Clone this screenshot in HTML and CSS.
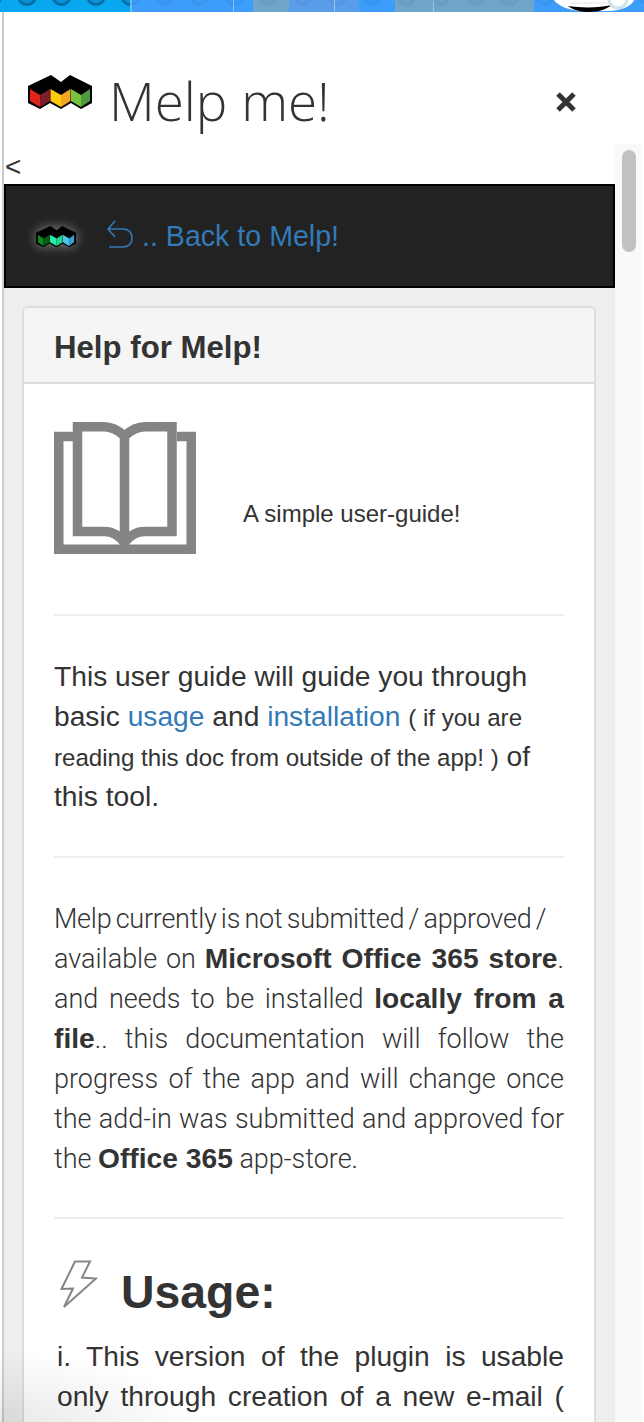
FILE: index.html
```html
<!DOCTYPE html>
<html>
<head>
  <meta charset="utf-8">
  <title>Melp me!</title>
  <link rel="stylesheet" href="styles.css">
</head>
<body>
  <div class="topstrip">
    <div class="seg seg-sky seg-a"></div>
    <div class="seg seg-blue seg-b"></div>
    <div class="seg seg-blue seg-c"></div>
    <div class="seg seg-grey seg-d"></div>
    <div class="seg seg-mid seg-e"></div>
    <div class="seg seg-mid seg-f"></div>
    <div class="seg seg-blue seg-d"></div>
    <div class="seg seg-grey seg-g"></div>
    <div class="seg seg-grey seg-h"></div>
    <div class="seg seg-blue seg-i"></div>
    <svg class="badge" viewBox="0 0 90 12">
      <path d="M4 0H84C82 6 72 10 60 11H32C18 10 8 6 4 0Z" fill="#fff"/>
      <path d="M18 6C30 8 50 8 62 5C56 9 50 12 40 12C30 12 24 10 18 6Z" fill="#000"/>
      <path d="M20 3H62" stroke="#dfe6ea" stroke-width="1"/>
      <circle cx="68" cy="-1" r="9" fill="none" stroke="#cfe3ec" stroke-width="3"/>
    </svg>
  </div>

  <div class="shell">
    <div class="title-row">
      <svg class="logo" viewBox="0 0 64 36">
        <polygon points="0,12 23,1 33,8 42,1 64,12 64,29 53,35 43,29 33,35 22,29 12,35 0,29" fill="#000"/>
        <polygon points="2,15 12,21 12,33 2,27" fill="#e0241b"/>
        <polygon points="12,21 22,15 22,27 12,33" fill="#7c1d2b"/>
        <polygon points="22.5,15 33,21 33,33 22.5,27" fill="#fccb0b"/>
        <polygon points="33,21 42.5,15 42.5,27 33,33" fill="#f5a623"/>
        <polygon points="43,15 53,21 53,33 43,27" fill="#7ac142"/>
        <polygon points="53,21 62,15 62,27 53,33" fill="#4f9a3f"/>
      </svg>
      <h1 class="app-title">Melp me!</h1>
      <svg class="close" viewBox="0 0 22 22">
        <path d="M3 3L19 19M19 3L3 19" fill="none" stroke="#333" stroke-width="5"/>
      </svg>
    </div>

    <div class="scroll-wrap">
      <div class="scroll-content">
        <div class="crumb">&lt;</div>
        <div class="backbar">
          <svg class="logo-small" viewBox="0 0 64 36">
            <polygon points="0,12 23,1 33,8 42,1 64,12 64,29 53,35 43,29 33,35 22,29 12,35 0,29" fill="#000"/>
            <polygon points="3,15 12,21 12,33 3,27" fill="#0f8a1c"/>
            <polygon points="12,21 22,15 22,27 12,33" fill="#0a5c14"/>
            <polygon points="22.5,15 33,21 33,33 22.5,27" fill="#1df0a8"/>
            <polygon points="33,21 42.5,15 42.5,27 33,33" fill="#25d58c"/>
            <polygon points="43,15 53,21 53,33 43,27" fill="#4cc4ea"/>
            <polygon points="53,21 61,15 61,27 53,33" fill="#3a9fd0"/>
          </svg>
          <svg class="back-icon" viewBox="0 0 28 30">
            <path d="M9 2L2 10L9 18M2 10H16C22 10 26 13 26 19C26 25 22 28 16 28H3" fill="none" stroke="#337ab7" stroke-width="1.6"/>
          </svg>
          <a class="back-link">.. Back to Melp!</a>
        </div>

        <div class="gutter">
          <div class="panel">
            <div class="panel-heading">Help for Melp!</div>
            <div class="panel-body">
              <div class="guide-row">
                <svg class="book" viewBox="0 0 142 132">
                  <path d="M19 14.5H4.75V127.25H137.25V14.5H123" fill="none" stroke="#848484" stroke-width="9.5"/>
                  <path d="M70.5 14C65 9 58 4.75 50 4.75H23.5V109.5H50C58 109.5 65 113 70.5 121C76 113 83 109.5 91 109.5H118V4.75H91C83 4.75 76 9 70.5 14V121" fill="none" stroke="#848484" stroke-width="9.5"/>
                </svg>
                <span class="guide-caption">A simple user-guide!</span>
              </div>
              <hr>
              <p class="intro">This user guide will guide you through basic <a>usage</a> and <a>installation</a> <small>( if you are reading this doc from outside of the app! )</small> of this tool.</p>
              <hr>
              <p class="note"><span class="note-first">Melp currently is not submitted / approved /</span><br>available on <b>Microsoft Office 365 store</b>. and needs to be installed <b>locally from a file</b>.. this documentation will follow the progress of the app and will change once the&nbsp;add-in was submitted and approved for the&nbsp;<b>Office 365</b> app-store.</p>
              <hr>
              <h2 class="usage-title">
                <svg class="bolt" viewBox="0 0 38 48">
                  <path d="M15 1.5H30L22 17.5L36 18.5L4 47L13 28.5L1.5 29Z" fill="none" stroke="#858585" stroke-width="2"/>
                </svg>
                Usage:
              </h2>
              <p class="step">i. This version of the plugin is usable only through creation of a new e-mail ( compose mode ) and it will not work for reading mode.</p>
            </div>
          </div>
        </div>
      </div>
      <div class="scrollbar"><div class="thumb"></div></div>
    </div>
  </div>
  <div class="corner-fade"></div>
</body>
</html>
```

FILE: styles.css
```css
html, body {
  height: 100%;
}
body {
  margin: 0;
  height: 100vh;
  overflow: hidden;
  display: flex;
  flex-direction: column;
  background: #fff;
  color: #333;
  font-family: "Liberation Sans", Arial, sans-serif;
}
a {
  color: #337ab7;
}

/* strip of the page behind the dialog */
.topstrip {
  position: relative;
  height: 12px;
  flex: none;
  display: flex;
  overflow: hidden;
}
.topstrip::after {
  content: "";
  position: absolute;
  inset: 0;
  background: radial-gradient(circle at 17px -4px, rgba(0,0,0,0.02) 6px, rgba(0,0,0,0.07) 9px, transparent 10px) 10px 0 / 34.5px 12px repeat-x;
}
.seg {
  flex: none;
}
.seg-sky {
  background: radial-gradient(circle at 17px -4px, rgba(0,40,80,0.12) 6px, rgba(0,40,80,0.5) 9px, transparent 10.5px) 10px 0 / 34.5px 12px repeat-x, #0aa7f1;
  border-right: 2px solid #6ebcf8;
}
.seg-blue {
  background: #3c9dfb;
}
.seg-grey {
  background: #70a5ca;
}
.seg-mid {
  background: #5a9eea;
}
.seg-a { width: 130px; }
.seg-b { width: 101px; border-right: 1px solid #8cc4fb; }
.seg-c { width: 19px; }
.seg-d { width: 36px; }
.seg-e { width: 45px; border-right: 1px solid #9cc8f4; }
.seg-f { width: 24px; }
.seg-g { width: 38px; border-right: 1px solid #9cc8e0; }
.seg-h { width: 100px; }
.seg-i { flex: 1; }
.badge {
  position: absolute;
  right: 4px;
  top: 0;
  width: 90px;
  height: 12px;
  z-index: 1;
}

.shell {
  flex: 1;
  min-height: 0;
  margin-left: 2px;
  border-left: 2px solid #ccc;
  display: flex;
  flex-direction: column;
}
.title-row {
  height: 132px;
  flex: none;
  display: flex;
  align-items: flex-start;
  box-sizing: border-box;
  padding: 55px 67px 0 24px;
}
.logo {
  width: 64px;
  height: 36px;
  margin-top: 7px;
  flex: none;
}
.app-title {
  margin: 0 0 0 17px;
  flex: 1;
  font-family: "Open Sans", sans-serif;
  font-weight: 300;
  font-size: 53px;
  line-height: 68px;
  color: #333;
}
.close {
  width: 22px;
  height: 22px;
  flex: none;
  margin-top: 24px;
}

.scroll-wrap {
  flex: 1;
  min-height: 0;
  display: flex;
}
.scroll-content {
  flex: 1;
  min-width: 0;
  overflow: hidden;
}
.scrollbar {
  width: 29px;
  flex: none;
  box-sizing: border-box;
  padding: 6px 6px 0 7px;
  background: #f9f9f9;
  border-right: 2px solid #fff;
}
.thumb {
  height: 102px;
  border-radius: 8px;
  background: #c1c1c1;
}

.crumb {
  height: 40px;
  font-size: 28px;
  line-height: 45px;
  padding-left: 1px;
}
.backbar {
  height: 104px;
  box-sizing: border-box;
  border: 2px solid #000;
  background: #222;
  display: flex;
  align-items: center;
  padding-left: 30px;
}
.logo-small {
  width: 40px;
  height: 23px;
  flex: none;
  filter: drop-shadow(0 0 6px rgba(255,255,255,0.45));
}
.back-icon {
  width: 28px;
  height: 30px;
  flex: none;
  margin: -4px 0 0 30px;
}
.back-link {
  margin-left: 8px;
  font-size: 28.6px;
}

.gutter {
  background: #eee;
  padding: 18px 19px 0 18px;
}
.panel {
  border: 2px solid #ddd;
  border-bottom: 0;
  border-radius: 6px 6px 0 0;
  background: #fff;
}
.panel-heading {
  height: 76px;
  box-sizing: border-box;
  padding: 0 30px;
  background: #f5f5f5;
  border-bottom: 2px solid #ddd;
  border-radius: 4px 4px 0 0;
  font-size: 31.2px;
  font-weight: bold;
  line-height: 80px;
}
.panel-body {
  padding: 38px 30px 0;
}
.guide-row {
  display: flex;
  align-items: flex-end;
  margin-bottom: 60px;
}
.book {
  width: 142px;
  height: 132px;
  flex: none;
}
.guide-caption {
  margin: 0 0 26px 47px;
  font-size: 24px;
}
hr {
  border: 0;
  border-top: 2px solid #eee;
  margin: 38px 0 0;
}
p {
  margin: 0;
  font-size: 28.2px;
  line-height: 40px;
}
p small {
  font-size: 24.1px;
  line-height: 1;
}
.intro {
  margin: 40px 0;
}
.note {
  margin: 41px 0 0;
  font-family: Roboto, "Liberation Sans", sans-serif;
  font-size: 27px;
  font-weight: 300;
  text-align: justify;
}
.note-first {
  letter-spacing: -0.25px;
  word-spacing: -2px;
}
.note b {
  font-family: "Liberation Sans", Arial, sans-serif;
  font-size: 28.2px;
  font-weight: bold;
  line-height: 1;
}
.usage-title {
  margin: 38px 0 0;
  height: 70px;
  display: flex;
  align-items: center;
  font-size: 46.4px;
  font-weight: bold;
}
.bolt {
  width: 38px;
  height: 48px;
  flex: none;
  margin: -16px 23px 0 6px;
}
.step {
  margin-top: 9px;
  padding-left: 3px;
  text-align: justify;
}

/* soft shadow bleeding in at the bottom left corner */
.corner-fade {
  position: absolute;
  left: 0;
  bottom: 0;
  width: 200px;
  height: 70px;
  background: radial-gradient(ellipse at 0 100%, rgba(0,0,0,0.09), transparent 70%);
  pointer-events: none;
}
```
